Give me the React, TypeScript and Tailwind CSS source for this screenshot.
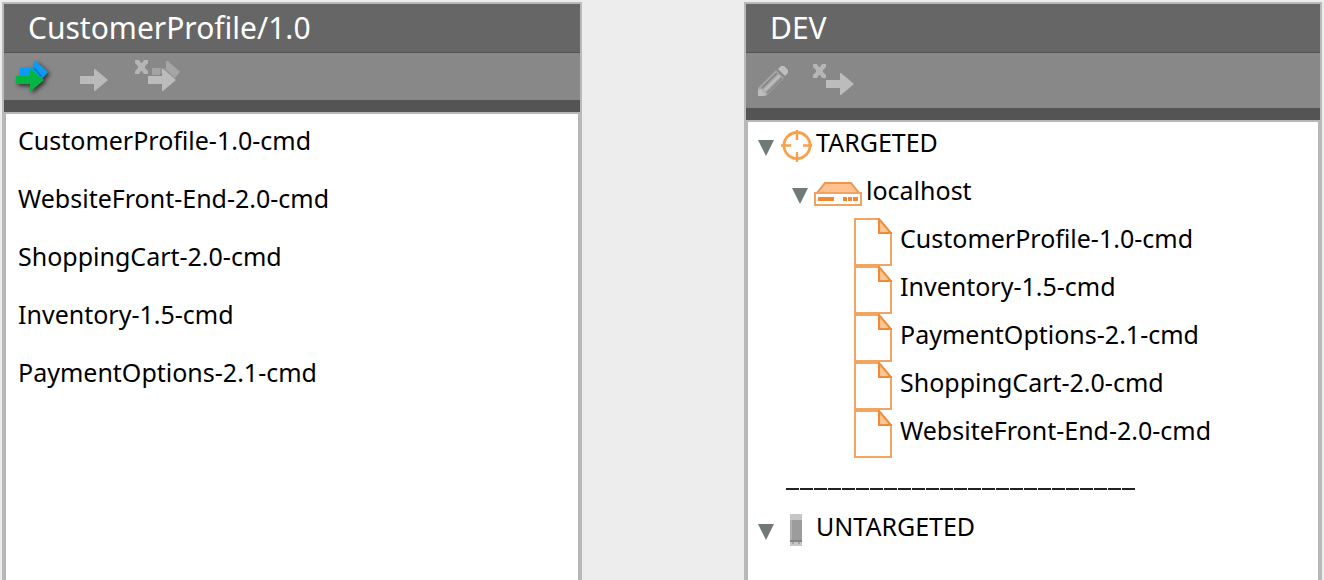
import { useState, type ReactNode } from "react";

const components = [
  "CustomerProfile-1.0-cmd",
  "WebsiteFront-End-2.0-cmd",
  "ShoppingCart-2.0-cmd",
  "Inventory-1.5-cmd",
  "PaymentOptions-2.1-cmd",
];

const deployed = [
  "CustomerProfile-1.0-cmd",
  "Inventory-1.5-cmd",
  "PaymentOptions-2.1-cmd",
  "ShoppingCart-2.0-cmd",
  "WebsiteFront-End-2.0-cmd",
];

const CROSS = "M1 4h4l2 3h1l2-3h4v3l-3 3v2l3 3v3h-4l-2-3h-1l-2 3H1v-3l3-3v-2L1 7z";

function DeployAllIcon() {
  return (
    <svg width="40" height="41" viewBox="0 0 40 41" aria-hidden="true">
      <g className="drop-shadow-[2px_2px_2px_rgba(0,0,0,0.65)]">
        <path d="M6 12h14V5h2l12 11-6 7H6z" fill="#0b9bf5" />
        <path d="M20 12l8 9" stroke="#0877c4" strokeWidth="1.5" />
        <path d="M2 20h14v-7h1l13 11-13 11h-1v-7H2z" fill="#05b544" />
      </g>
    </svg>
  );
}

function DeployIcon() {
  return (
    <svg width="32" height="41" viewBox="0 0 32 41" aria-hidden="true">
      <path d="M2 20h14v-7h1l13 11-13 11h-1v-7H2z" fill="#bababa" />
    </svg>
  );
}

function RemoveAllIcon() {
  return (
    <svg width="48" height="41" viewBox="0 0 48 41" aria-hidden="true">
      <path d={CROSS} fill="#b5b5b5" />
      <path d="M18 12h8v7h-8z" fill="#a3a3a3" />
      <path d="M32 5h2l12 11-6 7-8-9z" fill="#a5a5a5" />
      <path d="M26 12h5l10 10-3 3-12-8z" fill="#969696" />
      <path d="M14 20h14v-7h1l13 11-13 11h-1v-7H14z" fill="#bcbcbc" />
    </svg>
  );
}

function RemoveIcon() {
  return (
    <svg width="44" height="41" viewBox="0 0 44 41" aria-hidden="true">
      <path d={CROSS} fill="#b5b5b5" />
      <path d="M14 20h14v-7h1l13 11-13 11h-1v-7H14z" fill="#bcbcbc" />
    </svg>
  );
}

function EditIcon() {
  return (
    <svg width="32" height="41" viewBox="0 0 32 41" aria-hidden="true">
      <path d="M2 28L20 10l8 8-18 18H2z" fill="#a6a6a6" />
      <path d="M22 9l3-3h3l4 4v3l-3 3z" fill="#bebebe" />
      <path d="M6 28L21 13M11 33l15-15" stroke="#858585" strokeWidth="1.6" />
      <path d="M8.500 30.500L23.500 15.500" stroke="#bdbdbd" strokeWidth="2.400" />
      <path d="M19 8l11 11" stroke="#888888" strokeWidth="1.4" />
      <path d="M2 36v-6l3-1 5 5-2 2z" fill="#bdbdbd" />
    </svg>
  );
}

function TargetIcon() {
  return (
    <svg width="32" height="32" viewBox="0 0 32 32" aria-hidden="true" fill="none" stroke="#f8a04a" strokeWidth="2.8">
      <circle cx="17" cy="15.5" r="13" />
      <path d="M17 0v10M17 22v10M1 15.500h10M23 15.500h9" strokeWidth="2.4" />
    </svg>
  );
}

function ServerIcon() {
  return (
    <svg width="48" height="48" viewBox="0 0 48 48" aria-hidden="true">
      <path d="M11 13h26l8 10H3z" fill="#ffc18f" stroke="#f0954a" strokeWidth="2" />
      <path d="M1 23h46v12H1z" fill="#ffffff" stroke="#f2a25f" strokeWidth="2" />
      <path d="M4 29h16M29 29h4M34 29h4M39 29h5" stroke="#f2882f" strokeWidth="4" />
    </svg>
  );
}

function FileIcon() {
  return (
    <svg width="38" height="48" viewBox="0 0 38 48" aria-hidden="true">
      <path d="M25 1H1v46h36V14" fill="#ffffff" stroke="#f2a562" strokeWidth="2" />
      <path d="M25 1v14h12z" fill="#ffc693" stroke="#ef8b38" strokeWidth="2" />
    </svg>
  );
}

function CrateIcon() {
  return (
    <svg width="32" height="32" viewBox="0 0 32 32" aria-hidden="true">
      <path d="M10 0h12v32H10z" fill="#c6c6c6" />
      <path d="M10 6h12v20H10z" fill="#9c9c9c" />
      <path d="M10 6h2v20h-2z" fill="#b0b0b0" />
      <path d="M10 26h12v2H10z" fill="#858585" />
      <path d="M12 28h2v2h-2zM18 28h2v2h-2z" fill="#a5a5a5" />
    </svg>
  );
}

function Panel({ title, tools, toolbarClass, children }: { title: string; tools: ReactNode; toolbarClass: string; children: ReactNode }) {
  return (
    <section className="flex min-w-0 flex-col border-2 border-b-0 border-[#b9b9b9]">
      <h2 className="h-12 bg-[#666666] pl-6 text-3xl leading-12 text-white">{title}</h2>
      <div className={`flex items-center gap-6 border-t border-[#525252] bg-[#888888] pl-2.5 ${toolbarClass}`}>{tools}</div>
      <div className="h-3 bg-[#545454]" />
      <div className="flex-1 border-2 border-b-0 border-[#b4b8bb] bg-white">{children}</div>
    </section>
  );
}

function Tool({ label, children }: { label: string; children: ReactNode }) {
  return (
    <button type="button" aria-label={label} className="shrink-0">
      {children}
    </button>
  );
}

function Row({ icon, label, open, onToggle }: { icon: ReactNode; label: string; open: boolean; onToggle: () => void }) {
  return (
    <div className="flex items-center">
      <button type="button" aria-label={`Toggle ${label}`} aria-expanded={open} onClick={onToggle} className="mr-1.5 shrink-0">
        <svg width="16" height="20" viewBox="0 0 16 20" aria-hidden="true" className={open ? "" : "-rotate-90"}>
          <path d="M0 4h16L8 20z" fill="#717a78" />
        </svg>
      </button>
      <span className="shrink-0">{icon}</span>
      <span className="ml-1 pb-2">{label}</span>
    </div>
  );
}

export default function App() {
  const [targeted, setTargeted] = useState(true);
  const [host, setHost] = useState(true);
  const [untargeted, setUntargeted] = useState(true);

  return (
    <main className="grid min-h-screen grid-cols-[580fr_578fr] gap-x-[162px] bg-[#ededed] px-0.5 pt-0.5 font-['Noto_Sans',sans-serif] text-[25px] leading-6 text-black">
      <Panel
        title="CustomerProfile/1.0"
        toolbarClass="h-12"
        tools={
          <>
            <Tool label="Deploy all"><DeployAllIcon /></Tool>
            <Tool label="Deploy"><DeployIcon /></Tool>
            <Tool label="Remove all"><RemoveAllIcon /></Tool>
          </>
        }
      >
        <ul className="flex flex-col px-3">
          {components.map((name) => (
            <li key={name} className="h-[58px] pt-3.5">{name}</li>
          ))}
        </ul>
      </Panel>

      <Panel
        title="DEV"
        toolbarClass="h-14"
        tools={
          <>
            <Tool label="Edit"><EditIcon /></Tool>
            <Tool label="Remove"><RemoveIcon /></Tool>
          </>
        }
      >
        <div className="flex flex-col px-2.5 pt-2">
          <Row icon={<TargetIcon />} label="TARGETED" open={targeted} onToggle={() => setTargeted(!targeted)} />
          {targeted && (
            <div className="pt-2 pl-[34px]">
              <Row icon={<ServerIcon />} label="localhost" open={host} onToggle={() => setHost(!host)} />
              {host && (
                <ul className="pl-[62px]">
                  {deployed.map((name) => (
                    <li key={name} className="flex items-center gap-2">
                      <span className="shrink-0"><FileIcon /></span>
                      <span className="pb-2">{name}</span>
                    </li>
                  ))}
                </ul>
              )}
            </div>
          )}
          <hr className="mt-[30px] mb-6 ml-7 h-0.5 w-[350px] border-0 bg-[repeating-linear-gradient(90deg,#222222_0_13px,#ffffff_13px_14px)]" />
          <Row icon={<CrateIcon />} label="UNTARGETED" open={untargeted} onToggle={() => setUntargeted(!untargeted)} />
        </div>
      </Panel>
    </main>
  );
}
